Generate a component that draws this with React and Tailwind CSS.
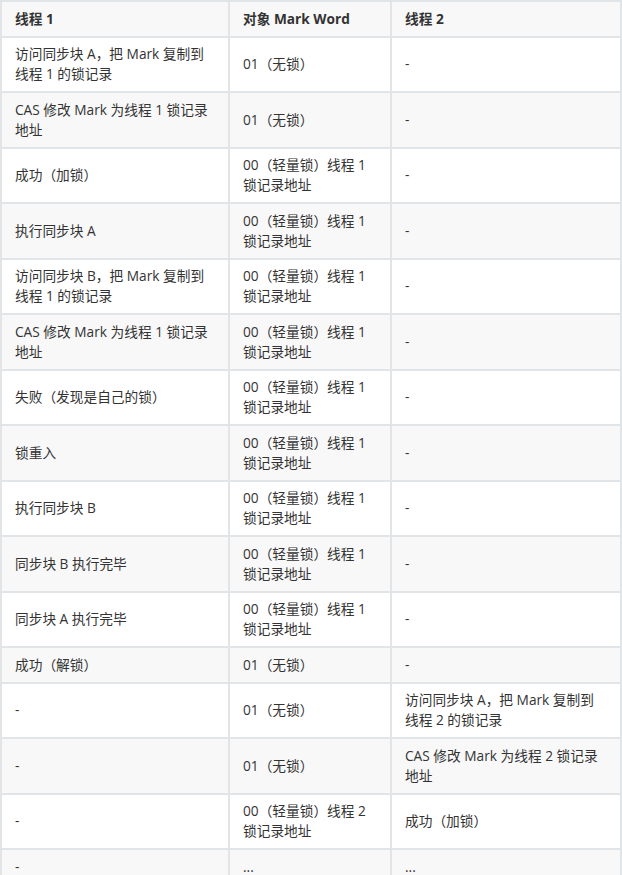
import React from 'react';

const L1 = ['00（轻量锁）线程 1', '锁记录地址'];

const rows = [
  [['访问同步块 A，把 Mark 复制到', '线程 1 的锁记录'], ['01（无锁）'], ['-']],
  [['CAS 修改 Mark 为线程 1 锁记录', '地址'], ['01（无锁）'], ['-']],
  [['成功（加锁）'], L1, ['-']],
  [['执行同步块 A'], L1, ['-']],
  [['访问同步块 B，把 Mark 复制到', '线程 1 的锁记录'], L1, ['-']],
  [['CAS 修改 Mark 为线程 1 锁记录', '地址'], L1, ['-']],
  [['失败（发现是自己的锁）'], L1, ['-']],
  [['锁重入'], L1, ['-']],
  [['执行同步块 B'], L1, ['-']],
  [['同步块 B 执行完毕'], L1, ['-']],
  [['同步块 A 执行完毕'], L1, ['-']],
  [['成功（解锁）'], ['01（无锁）'], ['-']],
  [['-'], ['01（无锁）'], ['访问同步块 A，把 Mark 复制到', '线程 2 的锁记录']],
  [['-'], ['01（无锁）'], ['CAS 修改 Mark 为线程 2 锁记录', '地址']],
  [['-'], ['00（轻量锁）线程 2', '锁记录地址'], ['成功（加锁）']],
  [['-'], ['...'], ['...']],
];

const cell = 'border-2 border-[#e2e5e8] px-[13px] py-[6.75px] align-middle whitespace-nowrap';

function Lines({ lines }) {
  return lines.map((t, i) => (
    <React.Fragment key={i}>
      {i > 0 && <br />}
      {t}
    </React.Fragment>
  ));
}

export default function App() {
  return (
    <div className="w-[622px] bg-white text-[#333] font-['Open_Sans','Noto_Sans_CJK_SC',sans-serif] text-[13.7px] leading-[20px]">
      <table className="w-[620px] table-fixed border-collapse">
        <colgroup>
          <col className="w-[228px]" />
          <col className="w-[162px]" />
          <col className="w-[230px]" />
        </colgroup>
        <thead>
          <tr className="bg-[#f8f8f8]">
            <th className={`${cell} text-left font-bold`}>线程 1</th>
            <th className={`${cell} text-left font-bold`}>对象 Mark Word</th>
            <th className={`${cell} text-left font-bold`}>线程 2</th>
          </tr>
        </thead>
        <tbody>
          {rows.map((r, i) => (
            <tr key={i} className={i % 2 === 1 ? 'bg-[#f8f8f8]' : 'bg-white'}>
              {r.map((c, j) => (
                <td key={j} className={cell}>
                  <Lines lines={c} />
                </td>
              ))}
            </tr>
          ))}
        </tbody>
      </table>
    </div>
  );
}
